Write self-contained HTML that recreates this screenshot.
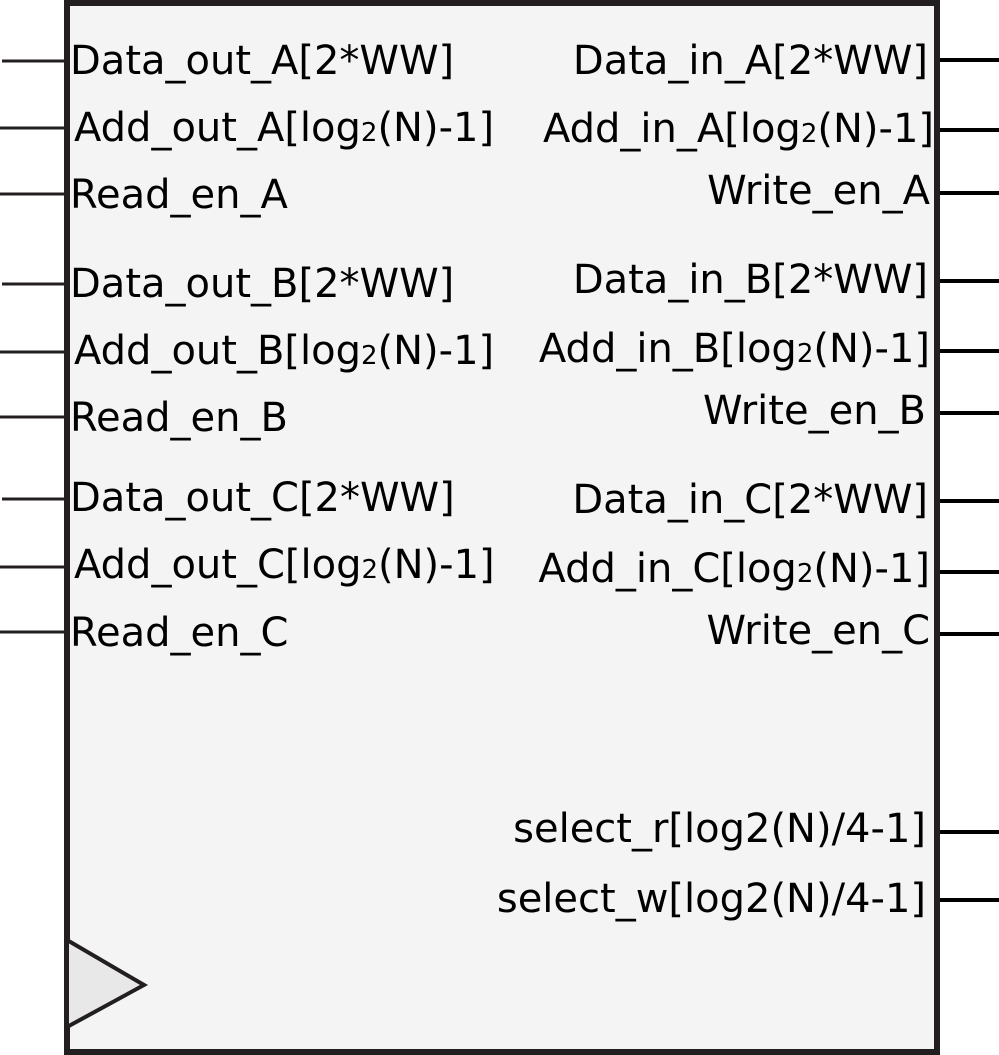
<!DOCTYPE html>
<html><head><style>body{margin:0;background:#fff}svg{display:block}</style></head>
<body>
<svg width="999" height="1055" viewBox="0 0 999 1055" xmlns="http://www.w3.org/2000/svg">
<rect x="67" y="3" width="870" height="1049" fill="#f4f4f4" stroke="#231f20" stroke-width="6"/>
<polygon points="67,940 144,985 67,1027" fill="#e8e8e8" stroke="#231f20" stroke-width="4"/>
<g stroke="#231f20" stroke-width="3">
<line x1="2" y1="61" x2="64" y2="61"/><line x1="0" y1="128" x2="64" y2="128"/><line x1="0" y1="194" x2="64" y2="194"/>
<line x1="2" y1="284" x2="64" y2="284"/><line x1="0" y1="352" x2="64" y2="352"/><line x1="0" y1="417" x2="64" y2="417"/>
<line x1="2" y1="499" x2="64" y2="499"/><line x1="0" y1="567" x2="64" y2="567"/><line x1="0" y1="632" x2="64" y2="632"/>
</g>
<g stroke="#000" stroke-width="4">
<line x1="940" y1="60" x2="999" y2="60"/><line x1="940" y1="130" x2="999" y2="130"/><line x1="940" y1="193" x2="999" y2="193"/>
<line x1="940" y1="281" x2="999" y2="281"/><line x1="940" y1="351" x2="999" y2="351"/><line x1="940" y1="413" x2="999" y2="413"/>
<line x1="940" y1="501" x2="999" y2="501"/><line x1="940" y1="572" x2="999" y2="572"/><line x1="940" y1="634" x2="999" y2="634"/>
<line x1="940" y1="832" x2="999" y2="832"/><line x1="940" y1="900" x2="999" y2="900"/>
</g>
<g font-family="DejaVu Sans, sans-serif" font-size="40" fill="#000">
<text x="70" y="74">Data_out_A[2*WW]</text>
<text x="74" y="141">Add_out_A[log<tspan font-size="26">2</tspan>(N)-1]</text>
<text x="70" y="208">Read_en_A</text>
<text x="70" y="297">Data_out_B[2*WW]</text>
<text x="74" y="364">Add_out_B[log<tspan font-size="26">2</tspan>(N)-1]</text>
<text x="70" y="431">Read_en_B</text>
<text x="70" y="511">Data_out_C[2*WW]</text>
<text x="74" y="578">Add_out_C[log<tspan font-size="26">2</tspan>(N)-1]</text>
<text x="70" y="646">Read_en_C</text>
</g>
<g font-family="DejaVu Sans, sans-serif" font-size="40" fill="#000" text-anchor="end">
<text x="928" y="74">Data_in_A[2*WW]</text>
<text x="934" y="142">Add_in_A[log<tspan font-size="26">2</tspan>(N)-1]</text>
<text x="930" y="204">Write_en_A</text>
<text x="928" y="293">Data_in_B[2*WW]</text>
<text x="930" y="362">Add_in_B[log<tspan font-size="26">2</tspan>(N)-1]</text>
<text x="926" y="424">Write_en_B</text>
<text x="928" y="513">Data_in_C[2*WW]</text>
<text x="930" y="582">Add_in_C[log<tspan font-size="26">2</tspan>(N)-1]</text>
<text x="930" y="644">Write_en_C</text>
<text x="926" y="842">select_r[log2(N)/4-1]</text>
<text x="926" y="912">select_w[log2(N)/4-1]</text>
</g>
</svg>
</body></html>
